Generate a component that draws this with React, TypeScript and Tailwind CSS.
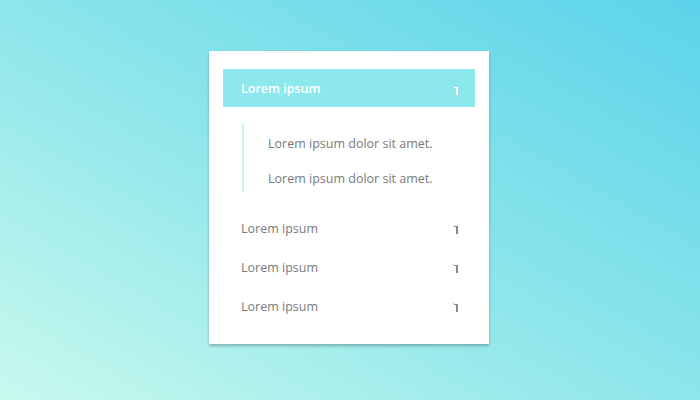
import React from "react";

function Corner({ color }: { color: string }) {
  return (
    <svg width="6" height="10" viewBox="0 0 6 10" className="shrink-0">
      <rect x="0" y="0" width="1" height="1" fill={color} opacity="0.6" />
      <rect x="1" y="1" width="4" height="1" fill={color} />
      <rect x="3" y="1" width="2" height="8" fill={color} />
    </svg>
  );
}

export default function App() {
  const items = ["Lorem ipsum", "Lorem ipsum", "Lorem ipsum"];
  return (
    <div
      className="w-[700px] h-[400px] flex justify-center items-start pt-[51px] bg-[linear-gradient(to_top_right,#c8f9ee_0%,#8ce5ea_50%,#5bd3ea_100%)]"
      style={{ fontFamily: '"Open Sans", "Noto Sans", sans-serif' }}
    >
      <div className="w-[280px] bg-white pt-[18px] px-[14px] pb-[19px] shadow-[0_2px_3px_rgba(0,0,0,0.25)] -ml-[2px]">
        <div className="h-[38px] bg-[#8de8ee] flex items-center justify-between pl-[18px] pr-[16px]">
          <span className="text-[12.5px] font-semibold text-white pt-[3px]">Lorem ipsum</span>
          <span className="mt-[6px]">
            <Corner color="#ffffff" />
          </span>
        </div>
        <div className="mt-[17px] ml-[19px] border-l-2 border-[#c6f5ef] pt-[3px] h-[68px]">
          <div className="h-[35px] flex items-center pl-[24px] text-[12.5px] text-[#7a7a7a]">
            Lorem ipsum dolor sit amet.
          </div>
          <div className="h-[35px] flex items-center pl-[24px] text-[12.5px] text-[#7a7a7a]">
            Lorem ipsum dolor sit amet.
          </div>
        </div>
        <div className="mt-[16px]">
          {items.map((t, i) => (
            <div key={i} className="h-[39px] flex items-center justify-between pl-[18px] pr-[16px]">
              <span className="text-[12.5px] text-[#7a7a7a] pt-[4px]">{t}</span>
              <span className="mt-[5px]">
                <Corner color="#888888" />
              </span>
            </div>
          ))}
        </div>
      </div>
    </div>
  );
}
